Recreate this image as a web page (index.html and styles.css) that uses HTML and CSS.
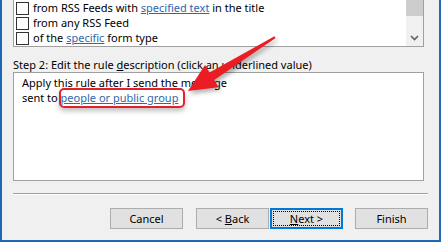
FILE: index.html
```html
<!DOCTYPE html>
<html>
<head>
<meta charset="utf-8">
<link rel="stylesheet" href="styles.css">
</head>
<body>
<div class="window">
  <div class="listbox">
    <div class="items">
      <div class="row"><span class="cb"></span><span class="txt">from RSS Feeds with <span class="lnk">specified text</span> in the title</span></div>
      <div class="row"><span class="cb"></span><span class="txt">from any RSS Feed</span></div>
      <div class="row"><span class="cb"></span><span class="txt">of the <span class="lnk">specific</span> form type</span></div>
    </div>
    <div class="scrollbar">
      <div class="thumb"></div>
      <div class="track"></div>
      <div class="sbtn">
        <svg width="17" height="17" viewBox="0 0 17 17"><path d="M5 7 L8.5 10.5 L12 7" fill="none" stroke="#606060" stroke-width="1.6"/></svg>
      </div>
    </div>
  </div>
  <div class="label">Step 2: Edit the rule <u>d</u>escription (click an underlined value)</div>
  <div class="descbox">
    <div class="line">Apply this rule after I send the message</div>
    <div class="line">sent to <span class="lnk">people or public group</span></div>
  </div>
  <div class="sep"></div>
  <div class="buttons">
    <div class="btn cancel"><span>Cancel</span></div>
    <div class="btn back"><span>&lt; <u>B</u>ack</span></div>
    <div class="btn next"><span><u>N</u>ext &gt;</span></div>
    <div class="btn finish"><span>Finish</span></div>
  </div>
  <div class="highlight"></div>
  <svg class="arrow" width="441" height="242" viewBox="0 0 441 242">
    <polygon points="186,91 203,65 207.5,72.5 272.5,36.3 273.6,38 212.2,80 216.7,87.3" fill="#ec1c24"/>
  </svg>
</div>
</body>
</html>
```
FILE: styles.css
```css
html, body {
  margin: 0;
  padding: 0;
  background: #f0f0f0;
}
.window {
  position: relative;
  width: 441px;
  height: 242px;
  box-sizing: border-box;
  border: 2px solid #1d69b6;
  border-top: 0;
  background: #f0f0f0;
  padding-left: 11px;
  font-family: "Noto Sans", sans-serif;
  font-size: 11px;
  color: #000;
  overflow: hidden;
}
.listbox {
  display: flex;
  width: 411px;
  height: 47px;
  box-sizing: border-box;
  border: 1px solid #a0a0a0;
  border-top: 0;
  background: #fff;
}
.items {
  flex: 1;
}
.row {
  display: flex;
  align-items: flex-start;
  height: 15px;
  line-height: 15px;
}
.cb {
  width: 13px;
  height: 13px;
  box-sizing: border-box;
  border: 1px solid #333;
  background: #fff;
  margin: 2px 4px 0 2px;
  flex: none;
}
.txt {
  white-space: nowrap;
}
.lnk {
  color: #2f67ad;
  text-decoration: underline;
}
.scrollbar {
  width: 17px;
  display: flex;
  flex-direction: column;
  background: #f0f0f0;
}
.thumb {
  height: 16px;
  background: #cdcdcd;
}
.track {
  flex: 1;
}
.sbtn {
  height: 17px;
}
.sbtn svg {
  display: block;
}
.label {
  margin-top: 10px;
  height: 15px;
  line-height: 15px;
  white-space: nowrap;
}
.descbox {
  width: 411px;
  height: 109px;
  box-sizing: border-box;
  border: 1px solid #a0a0a0;
  background: #fff;
  padding: 2px 0 0 8px;
}
.line {
  line-height: 15px;
  height: 15px;
  white-space: nowrap;
}
.sep {
  margin-top: 12px;
  width: 415px;
  height: 1px;
  background: #a0a0a0;
  border-bottom: 1px solid #fff;
}
.buttons {
  display: flex;
  margin-top: 13px;
  padding-left: 97px;
}
.btn {
  position: relative;
  width: 73px;
  height: 21px;
  box-sizing: border-box;
  border: 1px solid #adadad;
  background: #e1e1e1;
  display: flex;
  align-items: center;
  justify-content: center;
  white-space: pre;
}
.back {
  margin-left: 13px;
}
.next {
  margin-left: 1px;
  border: 2px solid #0078d7;
}
.next::after {
  content: "";
  position: absolute;
  left: 1px;
  top: 1px;
  right: 1px;
  bottom: 1px;
  border: 1px dotted #000;
}
.finish {
  margin-left: 12px;
}
.highlight {
  position: absolute;
  left: 57px;
  top: 88px;
  width: 126px;
  height: 20px;
  box-sizing: border-box;
  border: 2px solid #e4202c;
  border-radius: 5px;
  box-shadow: 0 3px 5px rgba(0, 0, 0, 0.25);
}
.arrow {
  position: absolute;
  left: 0;
  top: 0;
  filter: drop-shadow(2px 3px 2px rgba(0, 0, 0, 0.3));
}
```
